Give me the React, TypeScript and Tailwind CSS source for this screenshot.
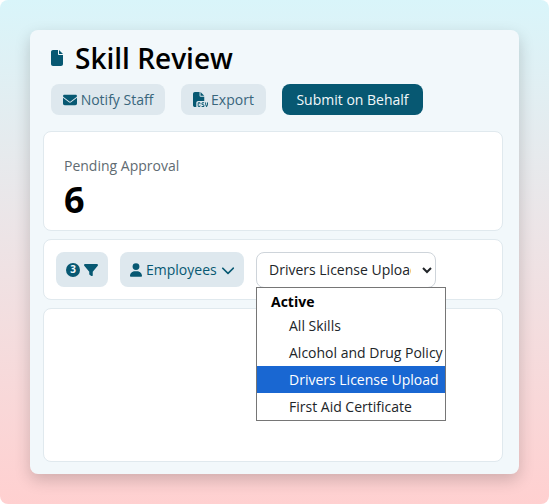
import { FaChevronDown, FaEnvelope, FaFile, FaFileCsv, FaFilter, FaUser } from "react-icons/fa6";

const SKILLS = ["All Skills", "Alcohol and Drug Policy", "Drivers License Upload", "First Aid Certificate"];

export default function App() {
  return (
    <div className="h-[504px] w-[549px] rounded-lg bg-gradient-to-b from-[#d9f5fa] to-[#ffd0d0] p-[30px] font-['Open_Sans',sans-serif]">
      <div className="flex h-[444px] flex-col rounded-lg bg-[#f2f8fb] pt-[12px] pr-[16px] pb-[12px] pl-[13px] shadow-[0_6px_16px_rgba(0,0,0,0.18)]">
        <div className="flex items-center gap-[12px] pl-[8px]">
          <FaFile className="h-[16px] w-[12px] text-[#075872]" />
          <h1 className="text-[28px] leading-[32px] font-semibold text-black">Skill Review</h1>
        </div>

        <div className="mt-[10px] flex items-center pl-[8px]">
          <button className="flex h-[31px] w-[114px] items-center justify-center gap-[4px] rounded-lg bg-[#dee8ee] text-sm text-[#39667c]">
            <FaEnvelope className="h-[14px] w-[14px] text-[#075872]" />
            Notify Staff
          </button>
          <button className="ml-[16px] flex h-[31px] w-[85px] items-center justify-center gap-[3px] rounded-lg bg-[#dee8ee] text-sm text-[#39667c]">
            <FaFileCsv className="h-[15px] w-[15px] text-[#075872]" />
            Export
          </button>
          <button className="ml-[16px] h-[31px] w-[141px] rounded-lg bg-[#075872] text-sm text-[#f2f8fb]">
            Submit on Behalf
          </button>
        </div>

        <div className="mt-[16px] flex h-[100px] flex-col rounded-lg border border-[#e0e9ee] bg-white px-[20px] pt-[24px]">
          <p className="text-sm leading-[20px] text-[#5f6b72]">Pending Approval</p>
          <p className="mt-[2px] text-[36px] leading-[44px] font-bold text-black">6</p>
        </div>

        <div className="relative mt-[8px] flex h-[61px] items-center rounded-lg border border-[#e0e9ee] bg-white pl-[12px]">
          <button className="flex h-[35px] w-[52px] items-center justify-center gap-[4px] rounded-lg bg-[#dee8ee] text-[#075872]">
            <span className="flex h-[14px] w-[14px] items-center justify-center rounded-full bg-[#075872] text-[10px] font-bold text-[#f2f8fb]">
              3
            </span>
            <FaFilter className="h-[14px] w-[14px]" />
          </button>
          <button className="ml-[12px] flex h-[35px] w-[124px] items-center gap-[4px] rounded-lg bg-[#dee8ee] pl-[10px] text-sm text-[#075872]">
            <FaUser className="h-[14px] w-[12px]" />
            Employees
            <FaChevronDown className="h-[14px] w-[14px]" />
          </button>
          <select
            defaultValue={SKILLS[2]}
            className="ml-[12px] h-[36px] w-[180px] rounded-lg border border-[#ced4da] bg-white pr-[8px] pl-[8px] text-sm text-[#212529]"
          >
            {SKILLS.map((s) => (
              <option key={s}>{s}</option>
            ))}
          </select>

          <div className="absolute top-[47px] left-[212px] w-[190px] border border-[#767676] bg-white text-sm leading-[27px] text-[#212529]">
            <div className="pt-[3px] pl-[14px] leading-[21px] font-bold text-black">Active</div>
            {SKILLS.map((s) => (
              <div key={s} className={s === SKILLS[2] ? "bg-[#1967d2] pl-[32px] text-white" : "pl-[32px]"}>
                {s}
              </div>
            ))}
          </div>
        </div>

        <div className="mt-[8px] flex-1 rounded-lg border border-[#e0e9ee] bg-white" />
      </div>
    </div>
  );
}
